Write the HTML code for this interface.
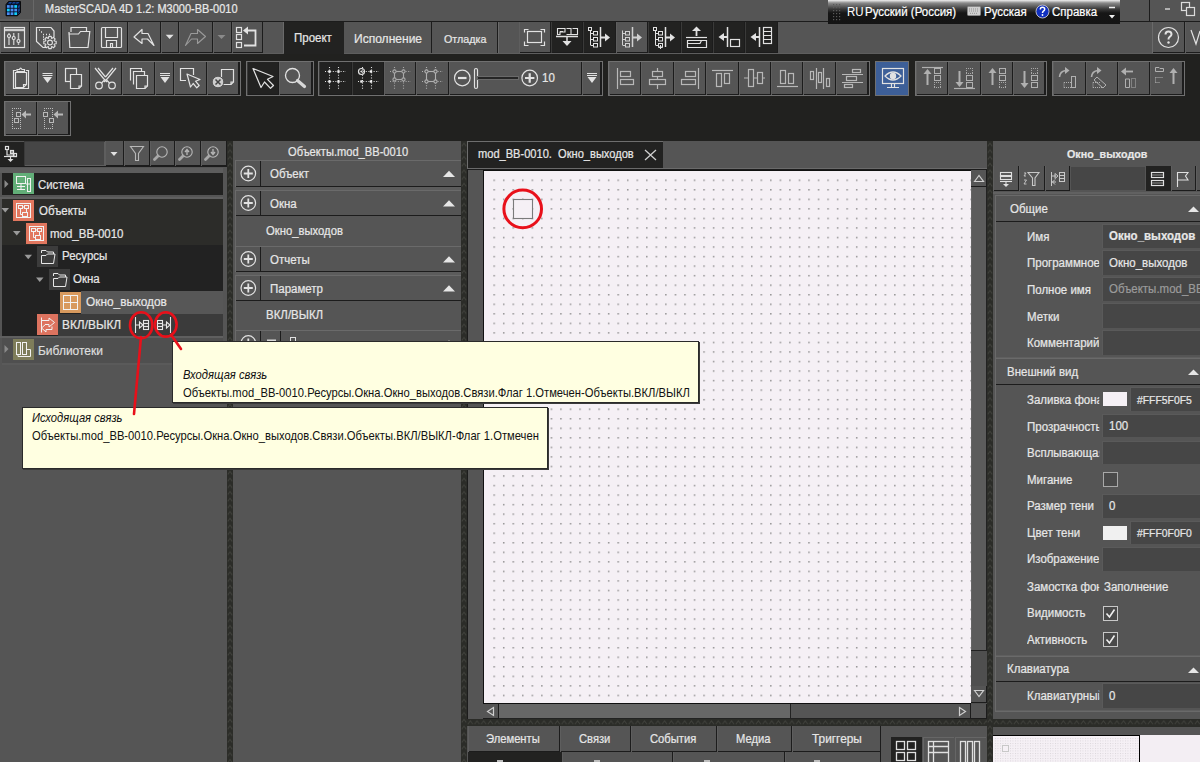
<!DOCTYPE html><html><head><meta charset="utf-8"><style>
html,body{margin:0;padding:0;}
body{width:1200px;height:762px;overflow:hidden;position:relative;background:#21211f;font-family:"Liberation Sans",sans-serif;}
div{position:absolute;box-sizing:border-box;}
.t{white-space:pre;-webkit-text-stroke:0.22px currentColor;}
</style></head><body>
<svg width="0" height="0" style="position:absolute"><defs><pattern id="vsp" x="0" y="0" width="6" height="6.7" patternUnits="userSpaceOnUse"><rect width="6" height="6.7" fill="#2b2c28"/><path d="M0.8 5.2 L3 2.2 L5.2 5.2" stroke="#40413c" stroke-width="1" fill="none"/></pattern><pattern id="hsp" x="0" y="0" width="6.7" height="7" patternUnits="userSpaceOnUse"><rect width="6.7" height="7" fill="#2b2c28"/><path d="M0.8 5.2 L3.3 1.8 L5.8 5.2" stroke="#40413c" stroke-width="1" fill="none"/></pattern></defs></svg>
<div style="left:0px;top:0px;width:1200px;height:21px;background:#555555"></div>
<div style="left:33px;top:0px;width:1px;height:21px;background:#686868"></div>
<div style="left:0px;top:19px;width:33px;height:2px;background:#5e5e5e"></div>
<div style="left:0px;top:21px;width:1200px;height:1px;background:#1c1c1c"></div>
<div class="t" style="left:45px;top:3.94px;font-size:11.88px;line-height:11.88px;color:#e8e8e8;transform:scaleX(0.926);transform-origin:0 0;">MasterSCADA 4D 1.2: M3000-BB-0010</div>
<div style="left:1149px;top:0px;width:1px;height:21px;background:#1c1c1c"></div>
<div style="left:0px;top:22px;width:1200px;height:31px;background:#555555"></div>
<div style="left:0px;top:53px;width:1200px;height:1px;background:#5e5e5e"></div>
<div style="left:0px;top:22px;width:30px;height:31px;background:#555555;box-shadow:inset -1px 0 0 #1c1c1c, inset 1px 0 0 #5e5e5e, inset 0 -1px 0 #1c1c1c"></div>
<div style="left:30px;top:22px;width:32px;height:31px;background:#555555;box-shadow:inset -1px 0 0 #1c1c1c, inset 1px 0 0 #5e5e5e, inset 0 -1px 0 #1c1c1c"></div>
<div style="left:62px;top:22px;width:33px;height:31px;background:#555555;box-shadow:inset -1px 0 0 #1c1c1c, inset 1px 0 0 #5e5e5e, inset 0 -1px 0 #1c1c1c"></div>
<div style="left:95px;top:22px;width:33px;height:31px;background:#555555;box-shadow:inset -1px 0 0 #1c1c1c, inset 1px 0 0 #5e5e5e, inset 0 -1px 0 #1c1c1c"></div>
<div style="left:128px;top:22px;width:33px;height:31px;background:#555555;box-shadow:inset -1px 0 0 #1c1c1c, inset 1px 0 0 #5e5e5e, inset 0 -1px 0 #1c1c1c"></div>
<div style="left:161px;top:22px;width:18px;height:31px;background:#555555;box-shadow:inset -1px 0 0 #1c1c1c, inset 1px 0 0 #5e5e5e, inset 0 -1px 0 #1c1c1c"></div>
<div style="left:179px;top:22px;width:34px;height:31px;background:#555555;box-shadow:inset -1px 0 0 #1c1c1c, inset 1px 0 0 #5e5e5e, inset 0 -1px 0 #1c1c1c"></div>
<div style="left:213px;top:22px;width:19px;height:31px;background:#555555;box-shadow:inset -1px 0 0 #1c1c1c, inset 1px 0 0 #5e5e5e, inset 0 -1px 0 #1c1c1c"></div>
<div style="left:232px;top:22px;width:31px;height:31px;background:#555555;box-shadow:inset -1px 0 0 #1c1c1c, inset 1px 0 0 #5e5e5e, inset 0 -1px 0 #1c1c1c"></div>
<div style="left:283px;top:22px;width:1px;height:31px;background:#6a6a6a"></div>
<div style="left:284px;top:22px;width:60px;height:32px;background:#222221"></div>
<div style="left:344px;top:22px;width:88px;height:31px;background:#555555;box-shadow:inset -1px 0 0 #1c1c1c"></div>
<div style="left:432px;top:22px;width:66px;height:31px;background:#555555;box-shadow:inset -1px 0 0 #1c1c1c"></div>
<div style="left:498px;top:22px;width:1px;height:31px;background:#6a6a6a"></div>
<div class="t" style="left:294px;top:32.49px;font-size:12.42px;line-height:12.42px;color:#e6e6e6;transform:scaleX(0.926);transform-origin:0 0;">Проект</div>
<div class="t" style="left:354px;top:31.98px;font-size:13.01px;line-height:13.01px;color:#e6e6e6;transform:scaleX(0.926);transform-origin:0 0;">Исполнение</div>
<div class="t" style="left:444px;top:33.17px;font-size:11.61px;line-height:11.61px;color:#e6e6e6;transform:scaleX(0.926);transform-origin:0 0;">Отладка</div>
<div style="left:519px;top:22px;width:32px;height:31px;background:#555555;box-shadow:inset -1px 0 0 #1c1c1c, inset 1px 0 0 #5e5e5e, inset 0 -1px 0 #1c1c1c"></div>
<div style="left:551px;top:22px;width:32px;height:31px;background:#222221;box-shadow:inset -1px 0 0 #1c1c1c, inset 1px 0 0 #3a3a39, inset 0 -1px 0 #1c1c1c"></div>
<div style="left:583px;top:22px;width:33px;height:31px;background:#222221;box-shadow:inset -1px 0 0 #1c1c1c, inset 1px 0 0 #3a3a39, inset 0 -1px 0 #1c1c1c"></div>
<div style="left:616px;top:22px;width:32px;height:31px;background:#555555;box-shadow:inset -1px 0 0 #1c1c1c, inset 1px 0 0 #5e5e5e, inset 0 -1px 0 #1c1c1c"></div>
<div style="left:648px;top:22px;width:33px;height:31px;background:#222221;box-shadow:inset -1px 0 0 #1c1c1c, inset 1px 0 0 #3a3a39, inset 0 -1px 0 #1c1c1c"></div>
<div style="left:681px;top:22px;width:32px;height:31px;background:#222221;box-shadow:inset -1px 0 0 #1c1c1c, inset 1px 0 0 #3a3a39, inset 0 -1px 0 #1c1c1c"></div>
<div style="left:713px;top:22px;width:32px;height:31px;background:#222221;box-shadow:inset -1px 0 0 #1c1c1c, inset 1px 0 0 #3a3a39, inset 0 -1px 0 #1c1c1c"></div>
<div style="left:745px;top:22px;width:33px;height:31px;background:#222221;box-shadow:inset -1px 0 0 #1c1c1c, inset 1px 0 0 #3a3a39, inset 0 -1px 0 #1c1c1c"></div>
<div style="left:1152px;top:22px;width:33px;height:31px;background:#555555;box-shadow:inset -1px 0 0 #1c1c1c, inset 1px 0 0 #5e5e5e, inset 0 -1px 0 #1c1c1c"></div>
<div style="left:1185px;top:22px;width:35px;height:31px;background:#555555;box-shadow:inset -1px 0 0 #1c1c1c, inset 1px 0 0 #5e5e5e, inset 0 -1px 0 #1c1c1c"></div>
<div style="left:1152px;top:22px;width:1px;height:31px;background:#6a6a6a"></div>
<div style="left:4px;top:61px;width:237px;height:35px;box-sizing:border-box;border:1px solid #707070;background:#1c1c1c"></div>
<div style="left:5px;top:62px;width:33px;height:33px;background:#555555;box-shadow:inset -1px 0 0 #1c1c1c, inset 1px 0 0 #5e5e5e, inset 0 -1px 0 #1c1c1c"></div>
<div style="left:38px;top:62px;width:19px;height:33px;background:#555555;box-shadow:inset -1px 0 0 #1c1c1c, inset 1px 0 0 #5e5e5e, inset 0 -1px 0 #1c1c1c"></div>
<div style="left:57px;top:62px;width:33px;height:33px;background:#555555;box-shadow:inset -1px 0 0 #1c1c1c, inset 1px 0 0 #5e5e5e, inset 0 -1px 0 #1c1c1c"></div>
<div style="left:90px;top:62px;width:32px;height:33px;background:#555555;box-shadow:inset -1px 0 0 #1c1c1c, inset 1px 0 0 #5e5e5e, inset 0 -1px 0 #1c1c1c"></div>
<div style="left:122px;top:62px;width:33px;height:33px;background:#555555;box-shadow:inset -1px 0 0 #1c1c1c, inset 1px 0 0 #5e5e5e, inset 0 -1px 0 #1c1c1c"></div>
<div style="left:155px;top:62px;width:19px;height:33px;background:#555555;box-shadow:inset -1px 0 0 #1c1c1c, inset 1px 0 0 #5e5e5e, inset 0 -1px 0 #1c1c1c"></div>
<div style="left:174px;top:62px;width:33px;height:33px;background:#555555;box-shadow:inset -1px 0 0 #1c1c1c, inset 1px 0 0 #5e5e5e, inset 0 -1px 0 #1c1c1c"></div>
<div style="left:207px;top:62px;width:32px;height:33px;background:#555555;box-shadow:inset -1px 0 0 #1c1c1c, inset 1px 0 0 #5e5e5e, inset 0 -1px 0 #1c1c1c"></div>
<div style="left:246px;top:61px;width:68px;height:35px;box-sizing:border-box;border:1px solid #707070;background:#1c1c1c"></div>
<div style="left:247px;top:62px;width:32px;height:33px;background:#222221;box-shadow:inset -1px 0 0 #1c1c1c, inset 1px 0 0 #3a3a39, inset 0 -1px 0 #1c1c1c"></div>
<div style="left:279px;top:62px;width:33px;height:33px;background:#555555;box-shadow:inset -1px 0 0 #1c1c1c, inset 1px 0 0 #5e5e5e, inset 0 -1px 0 #1c1c1c"></div>
<div style="left:318px;top:61px;width:285px;height:35px;box-sizing:border-box;border:1px solid #707070;background:#1c1c1c"></div>
<div style="left:319px;top:62px;width:33px;height:33px;background:#222221;box-shadow:inset -1px 0 0 #1c1c1c, inset 1px 0 0 #3a3a39, inset 0 -1px 0 #1c1c1c"></div>
<div style="left:352px;top:62px;width:32px;height:33px;background:#222221;box-shadow:inset -1px 0 0 #1c1c1c, inset 1px 0 0 #3a3a39, inset 0 -1px 0 #1c1c1c"></div>
<div style="left:384px;top:62px;width:32px;height:33px;background:#555555;box-shadow:inset -1px 0 0 #1c1c1c, inset 1px 0 0 #5e5e5e, inset 0 -1px 0 #1c1c1c"></div>
<div style="left:416px;top:62px;width:33px;height:33px;background:#555555;box-shadow:inset -1px 0 0 #1c1c1c, inset 1px 0 0 #5e5e5e, inset 0 -1px 0 #1c1c1c"></div>
<div style="left:449px;top:62px;width:133px;height:33px;background:#555555;box-shadow:inset -1px 0 0 #1c1c1c, inset 1px 0 0 #5e5e5e, inset 0 -1px 0 #1c1c1c"></div>
<div style="left:582px;top:62px;width:19px;height:33px;background:#555555;box-shadow:inset -1px 0 0 #1c1c1c, inset 1px 0 0 #5e5e5e, inset 0 -1px 0 #1c1c1c"></div>
<div style="left:608px;top:61px;width:262px;height:35px;box-sizing:border-box;border:1px solid #707070;background:#1c1c1c"></div>
<div style="left:609px;top:62px;width:32px;height:33px;background:#555555;box-shadow:inset -1px 0 0 #1c1c1c, inset 1px 0 0 #5e5e5e, inset 0 -1px 0 #1c1c1c"></div>
<div style="left:641px;top:62px;width:33px;height:33px;background:#555555;box-shadow:inset -1px 0 0 #1c1c1c, inset 1px 0 0 #5e5e5e, inset 0 -1px 0 #1c1c1c"></div>
<div style="left:674px;top:62px;width:32px;height:33px;background:#555555;box-shadow:inset -1px 0 0 #1c1c1c, inset 1px 0 0 #5e5e5e, inset 0 -1px 0 #1c1c1c"></div>
<div style="left:706px;top:62px;width:33px;height:33px;background:#555555;box-shadow:inset -1px 0 0 #1c1c1c, inset 1px 0 0 #5e5e5e, inset 0 -1px 0 #1c1c1c"></div>
<div style="left:739px;top:62px;width:32px;height:33px;background:#555555;box-shadow:inset -1px 0 0 #1c1c1c, inset 1px 0 0 #5e5e5e, inset 0 -1px 0 #1c1c1c"></div>
<div style="left:771px;top:62px;width:32px;height:33px;background:#555555;box-shadow:inset -1px 0 0 #1c1c1c, inset 1px 0 0 #5e5e5e, inset 0 -1px 0 #1c1c1c"></div>
<div style="left:803px;top:62px;width:33px;height:33px;background:#555555;box-shadow:inset -1px 0 0 #1c1c1c, inset 1px 0 0 #5e5e5e, inset 0 -1px 0 #1c1c1c"></div>
<div style="left:836px;top:62px;width:32px;height:33px;background:#555555;box-shadow:inset -1px 0 0 #1c1c1c, inset 1px 0 0 #5e5e5e, inset 0 -1px 0 #1c1c1c"></div>
<div style="left:875px;top:61px;width:34px;height:35px;box-sizing:border-box;border:1px solid #707070;background:#1c1c1c"></div>
<div style="left:876px;top:62px;width:32px;height:33px;background:#3d5f98"></div>
<div style="left:915px;top:61px;width:132px;height:35px;box-sizing:border-box;border:1px solid #707070;background:#1c1c1c"></div>
<div style="left:916px;top:62px;width:32px;height:33px;background:#555555;box-shadow:inset -1px 0 0 #1c1c1c, inset 1px 0 0 #5e5e5e, inset 0 -1px 0 #1c1c1c"></div>
<div style="left:948px;top:62px;width:33px;height:33px;background:#555555;box-shadow:inset -1px 0 0 #1c1c1c, inset 1px 0 0 #5e5e5e, inset 0 -1px 0 #1c1c1c"></div>
<div style="left:981px;top:62px;width:32px;height:33px;background:#555555;box-shadow:inset -1px 0 0 #1c1c1c, inset 1px 0 0 #5e5e5e, inset 0 -1px 0 #1c1c1c"></div>
<div style="left:1013px;top:62px;width:32px;height:33px;background:#555555;box-shadow:inset -1px 0 0 #1c1c1c, inset 1px 0 0 #5e5e5e, inset 0 -1px 0 #1c1c1c"></div>
<div style="left:1052px;top:61px;width:133px;height:35px;box-sizing:border-box;border:1px solid #707070;background:#1c1c1c"></div>
<div style="left:1053px;top:62px;width:33px;height:33px;background:#555555;box-shadow:inset -1px 0 0 #1c1c1c, inset 1px 0 0 #5e5e5e, inset 0 -1px 0 #1c1c1c"></div>
<div style="left:1086px;top:62px;width:32px;height:33px;background:#555555;box-shadow:inset -1px 0 0 #1c1c1c, inset 1px 0 0 #5e5e5e, inset 0 -1px 0 #1c1c1c"></div>
<div style="left:1118px;top:62px;width:32px;height:33px;background:#555555;box-shadow:inset -1px 0 0 #1c1c1c, inset 1px 0 0 #5e5e5e, inset 0 -1px 0 #1c1c1c"></div>
<div style="left:1150px;top:62px;width:33px;height:33px;background:#555555;box-shadow:inset -1px 0 0 #1c1c1c, inset 1px 0 0 #5e5e5e, inset 0 -1px 0 #1c1c1c"></div>
<div class="t" style="left:542px;top:72.49px;font-size:12.42px;line-height:12.42px;color:#e6e6e6;transform:scaleX(0.926);transform-origin:0 0;">10</div>
<div style="left:4px;top:101px;width:67px;height:35px;box-sizing:border-box;border:1px solid #707070;background:#1c1c1c"></div>
<div style="left:5px;top:102px;width:32px;height:33px;background:#555555;box-shadow:inset -1px 0 0 #1c1c1c, inset 1px 0 0 #5e5e5e, inset 0 -1px 0 #1c1c1c"></div>
<div style="left:37px;top:102px;width:32px;height:33px;background:#555555;box-shadow:inset -1px 0 0 #1c1c1c, inset 1px 0 0 #5e5e5e, inset 0 -1px 0 #1c1c1c"></div>
<div style="left:0px;top:141px;width:227px;height:621px;background:#555555"></div>
<div style="left:0px;top:141px;width:24px;height:25px;background:#222221;box-shadow:inset 0 1px 0 #555"></div>
<div style="left:24px;top:141px;width:81px;height:25px;background:#464646;box-shadow:inset 1px 1px 0 #3a3a3a, inset -1px -1px 0 #5e5e5e"></div>
<div style="left:105px;top:141px;width:19px;height:25px;background:#555555;box-shadow:inset -1px 0 0 #1c1c1c, inset 1px 0 0 #5e5e5e, inset 0 -1px 0 #1c1c1c"></div>
<div style="left:124px;top:141px;width:26px;height:25px;background:#555555;box-shadow:inset -1px 0 0 #1c1c1c, inset 1px 0 0 #5e5e5e, inset 0 -1px 0 #1c1c1c"></div>
<div style="left:150px;top:141px;width:25px;height:25px;background:#555555;box-shadow:inset -1px 0 0 #1c1c1c, inset 1px 0 0 #5e5e5e, inset 0 -1px 0 #1c1c1c"></div>
<div style="left:175px;top:141px;width:26px;height:25px;background:#555555;box-shadow:inset -1px 0 0 #1c1c1c, inset 1px 0 0 #5e5e5e, inset 0 -1px 0 #1c1c1c"></div>
<div style="left:201px;top:141px;width:26px;height:25px;background:#555555;box-shadow:inset -1px 0 0 #1c1c1c, inset 1px 0 0 #5e5e5e, inset 0 -1px 0 #1c1c1c"></div>
<div style="left:0px;top:166px;width:227px;height:1px;background:#1c1c1c"></div>
<div style="left:0px;top:168px;width:223px;height:5px;background:#5d5d5d"></div>
<div style="left:2px;top:173px;width:221px;height:22px;background:#222221"></div>
<div style="left:0px;top:197px;width:223px;height:2px;background:#5f5f5f"></div>
<div style="left:2px;top:199px;width:221px;height:46px;background:#2c2c29"></div>
<div style="left:2px;top:245px;width:221px;height:46px;background:#222222"></div>
<div style="left:2px;top:291px;width:221px;height:23px;background:#222222"></div>
<div style="left:81px;top:291px;width:142px;height:23px;background:#575757"></div>
<div style="left:2px;top:314px;width:221px;height:22px;background:#222222"></div>
<div style="left:58px;top:314px;width:165px;height:22px;background:#3b3b3b"></div>
<div style="left:0px;top:336px;width:223px;height:2px;background:#5f5f5f"></div>
<div style="left:2px;top:338px;width:221px;height:25px;background:#4f4f4f"></div>
<div style="left:2px;top:363px;width:221px;height:2px;background:#5a5a5a"></div>
<svg style="position:absolute;left:227px;top:141px" width="6" height="621"><rect width="6" height="621" fill="url(#vsp)"/></svg>
<div class="t" style="left:38px;top:178.58px;font-size:12.31px;line-height:12.31px;color:#e6e6e6;transform:scaleX(0.926);transform-origin:0 0;">Система</div>
<div class="t" style="left:38.5px;top:204.99px;font-size:12.42px;line-height:12.42px;color:#e6e6e6;transform:scaleX(0.926);transform-origin:0 0;">Объекты</div>
<div class="t" style="left:50px;top:227.99px;font-size:12.42px;line-height:12.42px;color:#e6e6e6;transform:scaleX(0.926);transform-origin:0 0;">mod_BB-0010</div>
<div class="t" style="left:62px;top:250.49px;font-size:12.42px;line-height:12.42px;color:#e6e6e6;transform:scaleX(0.926);transform-origin:0 0;">Ресурсы</div>
<div class="t" style="left:73px;top:272.99px;font-size:12.42px;line-height:12.42px;color:#e6e6e6;transform:scaleX(0.926);transform-origin:0 0;">Окна</div>
<div class="t" style="left:86px;top:295.67px;font-size:12.80px;line-height:12.80px;color:#e6e6e6;transform:scaleX(0.926);transform-origin:0 0;">Окно_выходов</div>
<div class="t" style="left:62px;top:318.62px;font-size:12.85px;line-height:12.85px;color:#e6e6e6;transform:scaleX(0.926);transform-origin:0 0;">ВКЛ/ВЫКЛ</div>
<div class="t" style="left:38px;top:345.03px;font-size:12.96px;line-height:12.96px;color:#dcdcdc;transform:scaleX(0.926);transform-origin:0 0;">Библиотеки</div>
<div style="left:233px;top:141px;width:228px;height:621px;background:#555555"></div>
<div class="t" style="left:287.5px;top:146.23px;font-size:12.02px;line-height:12.02px;color:#e6e6e6;transform:scaleX(0.926);transform-origin:0 0;">Объекты.mod_BB-0010</div>
<div style="left:235px;top:160px;width:226px;height:27px;background:#555555;box-shadow:inset 0 1px 0 #6a6a6a, inset 1px 0 0 #6a6a6a, inset 0 -1px 0 #1c1c1c"></div>
<div style="left:260px;top:161px;width:1px;height:25px;background:#1c1c1c"></div>
<div class="t" style="left:269.7px;top:168.49px;font-size:12.42px;line-height:12.42px;color:#e6e6e6;transform:scaleX(0.926);transform-origin:0 0;">Объект</div>
<div style="left:235px;top:187px;width:226px;height:3px;background:#5c5c5c"></div>
<div style="left:235px;top:190px;width:226px;height:26px;background:#555555;box-shadow:inset 0 1px 0 #6a6a6a, inset 1px 0 0 #6a6a6a, inset 0 -1px 0 #1c1c1c"></div>
<div style="left:260px;top:191px;width:1px;height:24px;background:#1c1c1c"></div>
<div class="t" style="left:269.7px;top:198.49px;font-size:12.42px;line-height:12.42px;color:#e6e6e6;transform:scaleX(0.926);transform-origin:0 0;">Окна</div>
<div style="left:235px;top:216px;width:226px;height:30px;background:#555555;box-shadow:inset 1px 0 0 #686868"></div>
<div class="t" style="left:266px;top:224.99px;font-size:12.18px;line-height:12.18px;color:#e6e6e6;transform:scaleX(0.926);transform-origin:0 0;">Окно_выходов</div>
<div style="left:235px;top:246px;width:226px;height:26px;background:#555555;box-shadow:inset 0 1px 0 #6a6a6a, inset 1px 0 0 #6a6a6a, inset 0 -1px 0 #1c1c1c"></div>
<div style="left:260px;top:247px;width:1px;height:24px;background:#1c1c1c"></div>
<div class="t" style="left:269.7px;top:254.19px;font-size:12.42px;line-height:12.42px;color:#e6e6e6;transform:scaleX(0.926);transform-origin:0 0;">Отчеты</div>
<div style="left:235px;top:272px;width:226px;height:3px;background:#5c5c5c"></div>
<div style="left:235px;top:275px;width:226px;height:26px;background:#555555;box-shadow:inset 0 1px 0 #6a6a6a, inset 1px 0 0 #6a6a6a, inset 0 -1px 0 #1c1c1c"></div>
<div style="left:260px;top:276px;width:1px;height:24px;background:#1c1c1c"></div>
<div class="t" style="left:269.7px;top:283.49px;font-size:12.42px;line-height:12.42px;color:#e6e6e6;transform:scaleX(0.926);transform-origin:0 0;">Параметр</div>
<div style="left:235px;top:301px;width:226px;height:29px;background:#555555;box-shadow:inset 1px 0 0 #686868"></div>
<div class="t" style="left:265.5px;top:308.89px;font-size:12.42px;line-height:12.42px;color:#e6e6e6;transform:scaleX(0.926);transform-origin:0 0;">ВКЛ/ВЫКЛ</div>
<div style="left:235px;top:330px;width:226px;height:26px;background:#555555;box-shadow:inset 0 1px 0 #6a6a6a, inset 1px 0 0 #6a6a6a, inset 0 -1px 0 #1c1c1c"></div>
<div style="left:260px;top:331px;width:1px;height:24px;background:#1c1c1c"></div>
<div class="t" style="left:269.7px;top:337.49px;font-size:12.42px;line-height:12.42px;color:#e6e6e6;transform:scaleX(0.926);transform-origin:0 0;"></div>
<svg style="position:absolute;left:461px;top:141px" width="6" height="621"><rect width="6" height="621" fill="url(#vsp)"/></svg>
<div style="left:467px;top:141px;width:520px;height:621px;background:#555555"></div>
<div style="left:467px;top:141px;width:196px;height:27px;background:#222221;box-shadow:inset 0 1px 0 #6e6e6e, inset 1px 0 0 #6e6e6e"></div>
<div class="t" style="left:477.7px;top:149.17px;font-size:11.97px;line-height:11.97px;color:#e6e6e6;transform:scaleX(0.926);transform-origin:0 0;">mod_BB-0010.  Окно_выходов</div>
<svg style="position:absolute;left:644px;top:149px;" width="13" height="12" viewBox="0 0 13 12" fill="none" stroke="#e0e0e0" stroke-width="1.2"><path d="M1 1 L12 11 M12 1 L1 11" stroke="#d0d0d0" stroke-width="1.3"/></svg>
<div style="left:467px;top:168px;width:520px;height:1px;background:#6a6a6a"></div>
<div style="left:467px;top:169px;width:1px;height:550px;background:#1c1c1c"></div>
<div style="left:468px;top:169px;width:519px;height:1px;background:#1c1c1c"></div>
<div style="left:483px;top:170px;width:1px;height:534px;background:#111"></div>
<div style="left:484px;top:171px;width:487px;height:532px;background:#f5f0f5"></div>
<svg style="position:absolute;left:484px;top:171px" width="487" height="532"><defs><pattern id="dg" x="9.4" y="8.5" width="9.54" height="9.54" patternUnits="userSpaceOnUse"><rect x="0.2" y="0" width="1.2" height="1.5" fill="#7a7a7a"/></pattern></defs><rect x="5" y="4" width="482" height="528" fill="url(#dg)"/></svg>
<div style="left:484px;top:170px;width:487px;height:1px;background:#111"></div>
<div style="left:484px;top:703px;width:487px;height:1px;background:#111"></div>
<div style="left:971px;top:170px;width:16px;height:534px;background:#4f4f4f"></div>
<div style="left:971px;top:170px;width:16px;height:17px;background:#555555;box-shadow:inset -1px -1px 0 #1c1c1c"></div>
<div style="left:971px;top:187px;width:16px;height:464px;background:#5c5c5c;box-shadow:inset -1px -1px 0 #222, inset 1px 0 0 #656565"></div>
<div style="left:971px;top:686px;width:16px;height:17px;background:#555555;box-shadow:inset -1px -1px 0 #1c1c1c"></div>
<svg style="position:absolute;left:973px;top:173px;" width="12" height="10" viewBox="0 0 12 10" fill="none" stroke="#e0e0e0" stroke-width="1.2"><path d="M1.5 8.5 L6 2.5 L10.5 8.5 Z" stroke="#cfcfcf"/></svg>
<svg style="position:absolute;left:973px;top:689px;" width="12" height="10" viewBox="0 0 12 10" fill="none" stroke="#e0e0e0" stroke-width="1.2"><path d="M1.5 1.5 L6 7.5 L10.5 1.5 Z" stroke="#cfcfcf"/></svg>
<div style="left:468px;top:704px;width:519px;height:15px;background:#4f4f4f"></div>
<div style="left:468px;top:704px;width:15px;height:15px;background:#555555"></div>
<div style="left:483px;top:704px;width:16px;height:15px;background:#555555;box-shadow:inset -1px -1px 0 #1c1c1c"></div>
<div style="left:499px;top:704px;width:292px;height:15px;background:#676767;box-shadow:inset -1px -1px 0 #222"></div>
<div style="left:791px;top:704px;width:163px;height:15px;background:#555555;box-shadow:inset 0 -1px 0 #222"></div>
<div style="left:954px;top:704px;width:17px;height:15px;background:#555555;box-shadow:inset -1px -1px 0 #1c1c1c"></div>
<div style="left:971px;top:704px;width:16px;height:15px;background:#555555;box-shadow:inset -1px -1px 0 #1c1c1c"></div>
<svg style="position:absolute;left:485px;top:706px;" width="12" height="11" viewBox="0 0 12 11" fill="none" stroke="#e0e0e0" stroke-width="1.2"><path d="M8.5 1.5 L2.5 5.5 L8.5 9.5 Z" stroke="#cfcfcf"/></svg>
<svg style="position:absolute;left:956px;top:706px;" width="12" height="11" viewBox="0 0 12 11" fill="none" stroke="#e0e0e0" stroke-width="1.2"><path d="M3.5 1.5 L9.5 5.5 L3.5 9.5 Z" stroke="#cfcfcf"/></svg>
<svg style="position:absolute;left:467px;top:719px" width="520" height="7"><rect width="520" height="7" fill="url(#hsp)"/></svg>
<div style="left:468px;top:726px;width:92px;height:26px;background:#555555;box-shadow:inset -1px 0 0 #1c1c1c, inset 1px 0 0 #5e5e5e, inset 0 -1px 0 #1c1c1c"></div>
<div style="left:560px;top:726px;width:71px;height:26px;background:#555555;box-shadow:inset -1px 0 0 #1c1c1c, inset 1px 0 0 #5e5e5e, inset 0 -1px 0 #1c1c1c"></div>
<div style="left:631px;top:726px;width:86px;height:26px;background:#555555;box-shadow:inset -1px 0 0 #1c1c1c, inset 1px 0 0 #5e5e5e, inset 0 -1px 0 #1c1c1c"></div>
<div style="left:717px;top:726px;width:75px;height:26px;background:#555555;box-shadow:inset -1px 0 0 #1c1c1c, inset 1px 0 0 #5e5e5e, inset 0 -1px 0 #1c1c1c"></div>
<div style="left:792px;top:726px;width:89px;height:26px;background:#555555;box-shadow:inset -1px 0 0 #1c1c1c, inset 1px 0 0 #5e5e5e, inset 0 -1px 0 #1c1c1c"></div>
<div style="left:881px;top:726px;width:106px;height:36px;background:#555555"></div>
<div class="t" style="left:486px;top:733.16px;font-size:12.10px;line-height:12.10px;color:#e6e6e6;transform:scaleX(0.926);transform-origin:0 0;">Элементы</div>
<div class="t" style="left:578.7px;top:733.16px;font-size:12.10px;line-height:12.10px;color:#e6e6e6;transform:scaleX(0.926);transform-origin:0 0;">Связи</div>
<div class="t" style="left:650.2px;top:733.16px;font-size:12.10px;line-height:12.10px;color:#e6e6e6;transform:scaleX(0.926);transform-origin:0 0;">События</div>
<div class="t" style="left:735.7px;top:733.16px;font-size:12.10px;line-height:12.10px;color:#e6e6e6;transform:scaleX(0.926);transform-origin:0 0;">Медиа</div>
<div class="t" style="left:812.4px;top:732.57px;font-size:12.80px;line-height:12.80px;color:#e6e6e6;transform:scaleX(0.926);transform-origin:0 0;">Триггеры</div>
<div style="left:468px;top:752px;width:94px;height:10px;background:#222221"></div>
<div style="left:562px;top:752px;width:111px;height:10px;background:#555555;box-shadow:inset -1px 0 0 #1c1c1c, inset 1px 0 0 #5e5e5e"></div>
<div style="left:673px;top:752px;width:112px;height:10px;background:#555555;box-shadow:inset -1px 0 0 #1c1c1c, inset 1px 0 0 #5e5e5e"></div>
<div style="left:785px;top:752px;width:96px;height:10px;background:#555555;box-shadow:inset -1px 0 0 #1c1c1c, inset 1px 0 0 #5e5e5e"></div>
<div style="left:891px;top:737px;width:31px;height:25px;background:#222221"></div>
<div style="left:923px;top:737px;width:31px;height:25px;background:#555555;box-shadow:inset 1px 1px 0 #666"></div>
<div style="left:955px;top:737px;width:31px;height:25px;background:#555555;box-shadow:inset 1px 1px 0 #666"></div>
<svg style="position:absolute;left:987px;top:141px" width="6" height="621"><rect width="6" height="621" fill="url(#vsp)"/></svg>
<div style="left:993px;top:141px;width:207px;height:621px;background:#555555"></div>
<div class="t" style="left:1066.5px;top:149.12px;font-size:11.56px;line-height:11.56px;color:#e8e8e8;transform:scaleX(0.926);transform-origin:0 0;font-weight:bold;">Окно_выходов</div>
<div style="left:993px;top:166px;width:26px;height:25px;background:#555555;box-shadow:inset -1px 0 0 #1c1c1c, inset 1px 0 0 #5e5e5e, inset 0 -1px 0 #1c1c1c"></div>
<div style="left:1019px;top:166px;width:26px;height:25px;background:#555555;box-shadow:inset -1px 0 0 #1c1c1c, inset 1px 0 0 #5e5e5e, inset 0 -1px 0 #1c1c1c"></div>
<div style="left:1045px;top:166px;width:25px;height:25px;background:#555555;box-shadow:inset -1px 0 0 #1c1c1c, inset 1px 0 0 #5e5e5e, inset 0 -1px 0 #1c1c1c"></div>
<div style="left:1071px;top:167px;width:74px;height:23px;background:#464646"></div>
<div style="left:1146px;top:166px;width:25px;height:25px;background:#222221"></div>
<div style="left:1171px;top:166px;width:25px;height:25px;background:#555555;box-shadow:inset -1px 0 0 #1c1c1c, inset 1px 0 0 #5e5e5e, inset 0 -1px 0 #1c1c1c"></div>
<div style="left:1196px;top:166px;width:29px;height:25px;background:#555555;box-shadow:inset -1px 0 0 #1c1c1c, inset 1px 0 0 #5e5e5e, inset 0 -1px 0 #1c1c1c"></div>
<div style="left:993px;top:192px;width:207px;height:2px;background:#616161"></div>
<div style="left:995px;top:195px;width:205px;height:27px;background:#555555;box-shadow:inset 0 1px 0 #6a6a6a, inset 1px 0 0 #6a6a6a, inset 0 -1px 0 #1c1c1c"></div>
<div class="t" style="left:1010px;top:202.89px;font-size:12.42px;line-height:12.42px;color:#e6e6e6;transform:scaleX(0.926);transform-origin:0 0;">Общие</div>
<svg style="position:absolute;left:1186px;top:205px;" width="14" height="8" viewBox="0 0 14 8" fill="none" stroke="#e0e0e0" stroke-width="1.2"><path d="M2 7 L7.5 1.5 L13 7 Z" fill="#e6e6e6" stroke="none"/></svg>
<div style="left:995px;top:222px;width:205px;height:136px;background:#555555;box-shadow:inset 1px 0 0 #6a6a6a, inset 0 -1px 0 #5f5f5f"></div>
<div class="t" style="left:1027px;top:231.49px;font-size:12.42px;line-height:12.42px;color:#e6e6e6;transform:scaleX(0.926);transform-origin:0 0;width:77.8px;overflow:hidden;">Имя</div>
<div style="left:1102px;top:224px;width:100px;height:24px;background:#464646;box-shadow:inset 0 1px 0 #5a5a5a, inset 1px 0 0 #5a5a5a"></div>
<div class="t" style="left:1108.5px;top:229.99px;font-size:12.42px;line-height:12.42px;color:#e6e6e6;transform:scaleX(0.926);transform-origin:0 0;font-weight:bold;">Окно_выходов</div>
<div class="t" style="left:1027px;top:257.49px;font-size:12.42px;line-height:12.42px;color:#e6e6e6;transform:scaleX(0.926);transform-origin:0 0;width:77.8px;overflow:hidden;">Программное</div>
<div style="left:1102px;top:250px;width:100px;height:25px;background:#464646;box-shadow:inset 0 1px 0 #5a5a5a, inset 1px 0 0 #5a5a5a"></div>
<div class="t" style="left:1108.5px;top:256.99px;font-size:12.42px;line-height:12.42px;color:#e6e6e6;transform:scaleX(0.926);transform-origin:0 0;">Окно_выходов</div>
<div class="t" style="left:1027px;top:283.99px;font-size:12.42px;line-height:12.42px;color:#e6e6e6;transform:scaleX(0.926);transform-origin:0 0;width:77.8px;overflow:hidden;">Полное имя</div>
<div style="left:1102px;top:277px;width:100px;height:24px;background:#464646;box-shadow:inset 0 1px 0 #5a5a5a, inset 1px 0 0 #5a5a5a"></div>
<div class="t" style="left:1108.5px;top:282.99px;font-size:12.42px;line-height:12.42px;color:#9a9a9a;transform:scaleX(0.926);transform-origin:0 0;">Объекты.mod_BB-0010.Ресурсы</div>
<div class="t" style="left:1027px;top:311.19px;font-size:12.42px;line-height:12.42px;color:#e6e6e6;transform:scaleX(0.926);transform-origin:0 0;width:77.8px;overflow:hidden;">Метки</div>
<div style="left:1102px;top:303px;width:100px;height:25px;background:#464646;box-shadow:inset 0 1px 0 #5a5a5a, inset 1px 0 0 #5a5a5a"></div>
<div class="t" style="left:1027px;top:337.49px;font-size:12.42px;line-height:12.42px;color:#e6e6e6;transform:scaleX(0.926);transform-origin:0 0;width:77.8px;overflow:hidden;">Комментарий</div>
<div style="left:1102px;top:330px;width:100px;height:25px;background:#464646;box-shadow:inset 0 1px 0 #5a5a5a, inset 1px 0 0 #5a5a5a"></div>
<div style="left:995px;top:358px;width:205px;height:27px;background:#555555;box-shadow:inset 0 1px 0 #6a6a6a, inset 1px 0 0 #6a6a6a, inset 0 -1px 0 #1c1c1c"></div>
<div class="t" style="left:1006.5px;top:366.49px;font-size:12.42px;line-height:12.42px;color:#e6e6e6;transform:scaleX(0.926);transform-origin:0 0;">Внешний вид</div>
<svg style="position:absolute;left:1186px;top:368px;" width="14" height="8" viewBox="0 0 14 8" fill="none" stroke="#e0e0e0" stroke-width="1.2"><path d="M2 7 L7.5 1.5 L13 7 Z" fill="#e6e6e6" stroke="none"/></svg>
<div style="left:995px;top:385px;width:205px;height:271px;background:#555555;box-shadow:inset 1px 0 0 #6a6a6a, inset 0 -1px 0 #5f5f5f"></div>
<div class="t" style="left:1027px;top:393.79px;font-size:12.42px;line-height:12.42px;color:#e6e6e6;transform:scaleX(0.926);transform-origin:0 0;width:77.8px;overflow:hidden;">Заливка фона</div>
<div style="left:1103px;top:392px;width:24px;height:14px;background:#f5f0f5"></div>
<div style="left:1130px;top:387px;width:72px;height:24px;background:#464646;box-shadow:inset 0 1px 0 #5a5a5a, inset 1px 0 0 #5a5a5a"></div>
<div class="t" style="left:1136.5px;top:394.99px;font-size:11.23px;line-height:11.23px;color:#e6e6e6;transform:scaleX(0.926);transform-origin:0 0;">#FFF5F0F5</div>
<div class="t" style="left:1027px;top:420.89px;font-size:12.42px;line-height:12.42px;color:#e6e6e6;transform:scaleX(0.926);transform-origin:0 0;width:77.8px;overflow:hidden;">Прозрачность</div>
<div style="left:1102px;top:414px;width:100px;height:23px;background:#464646;box-shadow:inset 0 1px 0 #5a5a5a, inset 1px 0 0 #5a5a5a"></div>
<div class="t" style="left:1108.5px;top:419.99px;font-size:12.42px;line-height:12.42px;color:#e6e6e6;transform:scaleX(0.926);transform-origin:0 0;">100</div>
<div class="t" style="left:1027px;top:447.19px;font-size:12.42px;line-height:12.42px;color:#e6e6e6;transform:scaleX(0.926);transform-origin:0 0;width:77.8px;overflow:hidden;">Всплывающая</div>
<div style="left:1102px;top:441px;width:100px;height:23px;background:#464646;box-shadow:inset 0 1px 0 #5a5a5a, inset 1px 0 0 #5a5a5a"></div>
<div class="t" style="left:1027px;top:474.29px;font-size:12.42px;line-height:12.42px;color:#e6e6e6;transform:scaleX(0.926);transform-origin:0 0;width:77.8px;overflow:hidden;">Мигание</div>
<div style="left:1103px;top:472px;width:15px;height:15px;box-sizing:border-box;border:1px solid #a8a8a8;background:#4a4a4a"></div>
<div class="t" style="left:1027px;top:500.49px;font-size:12.42px;line-height:12.42px;color:#e6e6e6;transform:scaleX(0.926);transform-origin:0 0;width:77.8px;overflow:hidden;">Размер тени</div>
<div style="left:1102px;top:494px;width:100px;height:24px;background:#464646;box-shadow:inset 0 1px 0 #5a5a5a, inset 1px 0 0 #5a5a5a"></div>
<div class="t" style="left:1108.5px;top:499.99px;font-size:12.42px;line-height:12.42px;color:#e6e6e6;transform:scaleX(0.926);transform-origin:0 0;">0</div>
<div class="t" style="left:1027px;top:527.49px;font-size:12.42px;line-height:12.42px;color:#e6e6e6;transform:scaleX(0.926);transform-origin:0 0;width:77.8px;overflow:hidden;">Цвет тени</div>
<div style="left:1103px;top:526px;width:24px;height:14px;background:#f0f0f0"></div>
<div style="left:1130px;top:521px;width:72px;height:23px;background:#464646;box-shadow:inset 0 1px 0 #5a5a5a, inset 1px 0 0 #5a5a5a"></div>
<div class="t" style="left:1136.5px;top:527.99px;font-size:11.23px;line-height:11.23px;color:#e6e6e6;transform:scaleX(0.926);transform-origin:0 0;">#FFF0F0F0</div>
<div class="t" style="left:1027px;top:553.49px;font-size:12.42px;line-height:12.42px;color:#e6e6e6;transform:scaleX(0.926);transform-origin:0 0;width:77.8px;overflow:hidden;">Изображение</div>
<div style="left:1102px;top:547px;width:100px;height:24px;background:#464646;box-shadow:inset 0 1px 0 #5a5a5a, inset 1px 0 0 #5a5a5a"></div>
<div class="t" style="left:1027px;top:580.79px;font-size:12.42px;line-height:12.42px;color:#e6e6e6;transform:scaleX(0.926);transform-origin:0 0;width:77.8px;overflow:hidden;">Замостка фона</div>
<div class="t" style="left:1103.7px;top:580.79px;font-size:12.42px;line-height:12.42px;color:#e6e6e6;transform:scaleX(0.926);transform-origin:0 0;">Заполнение</div>
<div class="t" style="left:1027px;top:607.09px;font-size:12.42px;line-height:12.42px;color:#e6e6e6;transform:scaleX(0.926);transform-origin:0 0;width:77.8px;overflow:hidden;">Видимость</div>
<div style="left:1103px;top:606px;width:15px;height:15px;box-sizing:border-box;border:1px solid #c8c8c8;background:#4a4a4a"></div>
<div class="t" style="left:1027px;top:634.29px;font-size:12.42px;line-height:12.42px;color:#e6e6e6;transform:scaleX(0.926);transform-origin:0 0;width:77.8px;overflow:hidden;">Активность</div>
<div style="left:1103px;top:632px;width:15px;height:15px;box-sizing:border-box;border:1px solid #c8c8c8;background:#4a4a4a"></div>
<svg style="position:absolute;left:1103px;top:606px;" width="15" height="15" viewBox="0 0 15 15" fill="none" stroke="#e0e0e0" stroke-width="1.2"><path d="M3.5 7.5 L6.5 11 L11.5 3.5" stroke="#eeeeee" stroke-width="1.6"/></svg>
<svg style="position:absolute;left:1103px;top:632px;" width="15" height="15" viewBox="0 0 15 15" fill="none" stroke="#e0e0e0" stroke-width="1.2"><path d="M3.5 7.5 L6.5 11 L11.5 3.5" stroke="#eeeeee" stroke-width="1.6"/></svg>
<div style="left:995px;top:656px;width:205px;height:26px;background:#555555;box-shadow:inset 0 1px 0 #6a6a6a, inset 1px 0 0 #6a6a6a, inset 0 -1px 0 #1c1c1c"></div>
<div class="t" style="left:1006.5px;top:662.99px;font-size:12.42px;line-height:12.42px;color:#e6e6e6;transform:scaleX(0.926);transform-origin:0 0;">Клавиатура</div>
<svg style="position:absolute;left:1186px;top:666px;" width="14" height="8" viewBox="0 0 14 8" fill="none" stroke="#e0e0e0" stroke-width="1.2"><path d="M2 7 L7.5 1.5 L13 7 Z" fill="#e6e6e6" stroke="none"/></svg>
<div style="left:995px;top:682px;width:205px;height:29px;background:#555555;box-shadow:inset 1px 0 0 #6a6a6a, inset 0 -1px 0 #5f5f5f"></div>
<div class="t" style="left:1027px;top:690.19px;font-size:12.42px;line-height:12.42px;color:#e6e6e6;transform:scaleX(0.926);transform-origin:0 0;width:77.8px;overflow:hidden;">Клавиатурный</div>
<div style="left:1102px;top:683px;width:100px;height:25px;background:#464646;box-shadow:inset 0 1px 0 #5a5a5a, inset 1px 0 0 #5a5a5a"></div>
<div class="t" style="left:1108.5px;top:689.99px;font-size:12.42px;line-height:12.42px;color:#e6e6e6;transform:scaleX(0.926);transform-origin:0 0;">0</div>
<div style="left:995px;top:711px;width:205px;height:7px;background:#555555;box-shadow:inset 0 1px 0 #6a6a6a"></div>
<svg style="position:absolute;left:993px;top:719px" width="207" height="8"><rect width="207" height="8" fill="url(#hsp)"/></svg>
<div style="left:993px;top:735px;width:147px;height:27px;background:#f5f0f5;box-shadow:inset 0 1px 0 #000, inset -1px 0 0 #000"></div>
<svg style="position:absolute;left:994px;top:737px" width="145" height="25"><defs><pattern id="pg" x="1" y="1" width="2.5" height="2.5" patternUnits="userSpaceOnUse"><rect width="0.9" height="0.9" fill="#d8d4d8"/></pattern></defs><rect width="145" height="25" fill="url(#pg)"/><rect x="8.5" y="8.5" width="6" height="6" fill="#f5f0f5" stroke="#c8c8c8" stroke-width="1"/></svg>
<div style="left:1140px;top:735px;width:60px;height:27px;background:#f3eef3"></div>
<div style="left:828px;top:0px;width:292px;height:24px;background:linear-gradient(#f0f0f0 0px,#cfcfcf 1px,#8a8a8a 3px,#3a3a3a 9px,#161616 13px,#141414 24px)"></div>
<div class="t" style="left:847px;top:6.49px;font-size:12.42px;line-height:12.42px;color:#ffffff;transform:scaleX(0.926);transform-origin:0 0;-webkit-text-stroke:0;">RU</div>
<div class="t" style="left:865px;top:6.49px;font-size:12.42px;line-height:12.42px;color:#ffffff;transform:scaleX(0.926);transform-origin:0 0;">Русский (Россия)</div>
<div class="t" style="left:984px;top:6.49px;font-size:12.42px;line-height:12.42px;color:#ffffff;transform:scaleX(0.926);transform-origin:0 0;">Русская</div>
<div class="t" style="left:1052px;top:6.49px;font-size:12.42px;line-height:12.42px;color:#ffffff;transform:scaleX(0.926);transform-origin:0 0;">Справка</div>
<svg style="position:absolute;left:832px;top:3px" width="10" height="18"><g fill="#5a5a5a"><rect x="1" y="1" width="1.2" height="1.2"/><rect x="1" y="4" width="1.2" height="1.2"/><rect x="1" y="7" width="1.2" height="1.2"/><rect x="1" y="10" width="1.2" height="1.2"/><rect x="1" y="13" width="1.2" height="1.2"/><rect x="1" y="16" width="1.2" height="1.2"/><rect x="4" y="1" width="1.2" height="1.2"/><rect x="4" y="4" width="1.2" height="1.2"/><rect x="4" y="7" width="1.2" height="1.2"/><rect x="4" y="10" width="1.2" height="1.2"/><rect x="4" y="13" width="1.2" height="1.2"/><rect x="4" y="16" width="1.2" height="1.2"/><rect x="7" y="1" width="1.2" height="1.2"/><rect x="7" y="4" width="1.2" height="1.2"/><rect x="7" y="7" width="1.2" height="1.2"/><rect x="7" y="10" width="1.2" height="1.2"/><rect x="7" y="13" width="1.2" height="1.2"/><rect x="7" y="16" width="1.2" height="1.2"/></g></svg>
<div style="left:496.5px;top:760px;width:6px;height:2px;background:#bdbdbd"></div>
<div style="left:593.5px;top:760px;width:6px;height:2px;background:#bdbdbd"></div>
<div style="left:703.5px;top:760px;width:6px;height:2px;background:#bdbdbd"></div>
<div style="left:813.5px;top:760px;width:6px;height:2px;background:#bdbdbd"></div>
<svg style="position:absolute;left:0;top:0" width="1200" height="762" fill="none"><path d="M6 4.5 L8.5 1.5 H20.5 V12.5 L17.5 15.8 H6 Z" fill="#06122a" stroke="#000" stroke-width="0.8"/><path d="M8 3.6 L9.3 2.2 H12 L10.7 3.6 Z M11.8 3.6 L13.1 2.2 H15.8 L14.5 3.6 Z M15.4 3.6 L16.7 2.2 H19.4 L18.1 3.6 Z" fill="#1a55c0" stroke="none"/><path d="M18.3 6 L19.6 4.6 V7.2 L18.3 8.6 Z M18.3 9.6 L19.6 8.2 V10.8 L18.3 12.2 Z M18.3 13.2 L19.6 11.8 V12.5 L18.3 14.2 Z" fill="#1a55c0" stroke="none"/><rect x="6.9" y="5.1" width="2.8" height="2.7" fill="#4a8ef2" stroke="none"/><rect x="10.6" y="5.1" width="2.8" height="2.7" fill="#4a8ef2" stroke="none"/><rect x="14.3" y="5.1" width="2.8" height="2.7" fill="#10d0ff" stroke="none"/><rect x="6.9" y="8.7" width="2.8" height="2.7" fill="#10d0ff" stroke="none"/><rect x="10.6" y="8.7" width="2.8" height="2.7" fill="#4a8ef2" stroke="none"/><rect x="14.3" y="8.7" width="2.8" height="2.7" fill="#4a8ef2" stroke="none"/><rect x="6.9" y="12.3" width="2.8" height="2.7" fill="#4a8ef2" stroke="none"/><rect x="10.6" y="12.3" width="2.8" height="2.7" fill="#4a8ef2" stroke="none"/><rect x="14.3" y="12.3" width="2.8" height="2.7" fill="#10d0ff" stroke="none"/><g stroke="#e2e2e2" stroke-width="1.2"><rect x="4.5" y="27.5" width="20" height="20"/><path d="M5 30 H24" stroke-width="2.4" stroke="#cfcfcf"/><path d="M9 33 V45 M13.7 33 V45 M18.5 33 V45" stroke="#c0c0c0" stroke-width="1.5"/><circle cx="9" cy="36" r="1.5" fill="#555"/><circle cx="13.7" cy="38" r="1.5" fill="#555"/><circle cx="18.5" cy="41" r="1.5" fill="#555"/></g><g stroke="#e2e2e2" stroke-width="1.2"><path d="M46 47.5 H43 L36.5 41.5 V27.5 H51 L54 31 V37"/><path d="M54.37 41.05 L56.17 41.25 L56.17 43.75 L54.37 43.95 L54.11 44.56 L55.25 45.98 L53.48 47.75 L52.06 46.61 L51.45 46.87 L51.25 48.67 L48.75 48.67 L48.55 46.87 L47.94 46.61 L46.52 47.75 L44.75 45.98 L45.89 44.56 L45.63 43.95 L43.83 43.75 L43.83 41.25 L45.63 41.05 L45.89 40.44 L44.75 39.02 L46.52 37.25 L47.94 38.39 L48.55 38.13 L48.75 36.33 L51.25 36.33 L51.45 38.13 L52.06 38.39 L53.48 37.25 L55.25 39.02 L54.11 40.44 Z" fill="#555" stroke-width="1.1" stroke-linejoin="round"/><circle cx="50" cy="42.5" r="2.4" stroke-width="1.1"/><path d="M39 30 h1 M41 32 h1 M43 34.5 h1 M46 34.5 h1 M49 34.5 h1 M43 37 h1 M43 39.5 h1" stroke-width="1.4"/></g><g stroke="#e2e2e2" stroke-width="1.2"><path d="M71 32 V27.5 H86.5 V32"/><path d="M69 32 L69.8 47.5 H88 L89.8 31.5 H80.5 L78.5 34 H69 Z" fill="#555"/></g><g stroke="#e2e2e2" stroke-width="1.2"><rect x="101.5" y="27.5" width="20" height="20" rx="1"/><path d="M105.5 27.5 V37.5 H117.5 V27.5"/><path d="M106.5 47.5 V40.5 H116.5 V47.5 M110.5 47.5 V43.5 H112.5 V47.5"/></g><path d="M134 37 L142 29.5 V33.5 H148 L154 45.5 L147.5 39 H142 V43.5 Z" stroke="#e2e2e2" stroke-width="1.2" stroke-linejoin="round"/><path d="M165.7 34.7 H173.6 L169.64999999999998 39 Z" fill="#e2e2e2" stroke="none"/><path d="M205.5 36.5 L197.5 29.5 V33.5 H191 L185.5 45.5 L191.5 39 H197.5 V43.5 Z" stroke="#9a9a9a" stroke-width="1.1" stroke-linejoin="round"/><path d="M217.5 35 H225.5 L221.5 39 Z" fill="#8a8a8a" stroke="none"/><g stroke="#e2e2e2" stroke-width="1.2"><rect x="236.5" y="27.5" width="5" height="5"/><rect x="236.5" y="34.5" width="5" height="5"/><rect x="236.5" y="42.5" width="5" height="5"/><path d="M244 45.5 H255.5 V30.5 H247" stroke-width="1.8"/><path d="M243 30.5 L248 26.5 V34.5 Z" fill="#e2e2e2" stroke="none"/></g><g stroke="#e2e2e2" stroke-width="1.2"><path d="M524.5 32.5 V29.5 H528.5 M540.5 29.5 H544.5 V32.5 M524.5 41.5 V45.5 H528.5 M540.5 45.5 H544.5 V41.5"/><rect x="527.5" y="31.5" width="14" height="11"/></g><g stroke="#e2e2e2" stroke-width="1.1"><path d="M557.5 28.5 H565 V32 H560 V34.5 H557.5 Z M566.5 28.5 H571 V34.5 H566.5 M572.5 28.5 H577.5 V34.5 H570 M560 31.5 H563"/><path d="M556 36.5 H578" stroke-width="1.5"/><path d="M567 37 V41.5" stroke-width="1.5"/><path d="M562.5 41 H571.5 L567 46 Z" fill="#e2e2e2" stroke="none"/></g><g stroke="#e2e2e2" stroke-width="1"><rect x="588.5" y="27.5" width="3" height="3"/><path d="M590.5 30.5 V45 M590.5 33.5 H593.5 M590.5 39.5 H593.5 M590.5 45.5 H593.5"/><rect x="593.5" y="31.5" width="4" height="3.5"/><rect x="593.5" y="37.5" width="4" height="3.5"/><rect x="593.5" y="43.5" width="4" height="3.5"/><path d="M600.5 27 V47" stroke-width="1.5"/><path d="M601 37.5 H606" stroke-width="2"/><path d="M605 33.5 L610 37.5 L605 41.5 Z" fill="#e2e2e2" stroke="none"/></g><g stroke="#d0d0d0" stroke-width="1"><path d="M622.5 30.5 V45 M622.5 33.5 H625.5 M622.5 39.5 H625.5 M622.5 45.5 H625.5"/><rect x="625.5" y="31.5" width="4" height="3.5"/><rect x="625.5" y="37.5" width="4" height="3.5"/><rect x="625.5" y="43.5" width="4" height="3.5"/><path d="M632.5 27 V47" stroke-width="1.5"/><path d="M633 37.5 H638" stroke-width="2"/><path d="M637 33.5 L642 37.5 L637 41.5 Z" fill="#d0d0d0" stroke="none"/></g><g stroke="#e2e2e2" stroke-width="1"><rect x="653.5" y="27.5" width="3" height="3"/><path d="M655.5 30.5 V45 M655.5 33.5 H658.5 M655.5 39.5 H658.5 M655.5 45.5 H658.5"/><rect x="658.5" y="31.5" width="4" height="3.5"/><rect x="658.5" y="37.5" width="4" height="3.5"/><rect x="658.5" y="43.5" width="4" height="3.5"/><path d="M665.5 27 V47" stroke-width="1.5"/><path d="M666 37.5 H671" stroke-width="2"/><path d="M670 33.5 L675 37.5 L670 41.5 Z" fill="#e2e2e2" stroke="none"/><path d="M660.5 45 V49 M658.5 47.5 H662.5"/></g><g stroke="#e2e2e2" stroke-width="1.2"><path d="M696.5 36 V30" stroke-width="1.8"/><path d="M692 31 L696.5 26.5 L701 31 Z" fill="#e2e2e2" stroke="none"/><path d="M686 37.5 H707"/><path d="M687.5 47.5 V40.5 H706.5 V47.5 Z M687.5 43.5 H700 L701.5 40.5"/></g><g stroke="#e2e2e2" stroke-width="1.2"><path d="M727.5 27 V47" stroke-width="1.5"/><path d="M723 37 H727" stroke-width="2"/><path d="M724 33 L718.5 37 L724 41 Z" fill="#e2e2e2" stroke="none"/><rect x="730.5" y="39.5" width="9" height="7"/></g><g stroke="#e2e2e2" stroke-width="1.2"><path d="M759.5 27 V47" stroke-width="1.5"/><path d="M755 37 H759" stroke-width="2"/><path d="M756 33 L750.5 37 L756 41 Z" fill="#e2e2e2" stroke="none"/><rect x="763.5" y="27.5" width="8" height="16"/><path d="M763.5 31.5 H771.5 M763.5 35.5 H771.5 M763.5 39.5 H771.5"/></g><circle cx="1168.5" cy="37.5" r="10" stroke="#e2e2e2" stroke-width="1.2"/><path d="M1165.5 34.5 Q1165.5 31.5 1168.5 31.5 Q1171.5 31.5 1171.5 34.3 Q1171.5 36 1169.5 37 Q1168.5 37.6 1168.5 39.5" stroke="#e2e2e2" stroke-width="2"/><circle cx="1168.5" cy="42.5" r="1.2" fill="#e2e2e2" stroke="none"/><path d="M1191 30 L1196 44 L1200 31" stroke="#e2e2e2" stroke-width="1.2"/><path d="M1165 9 H1170" stroke="#cfcfcf" stroke-width="1.5"/><rect x="1181.5" y="2.5" width="8" height="8" stroke="#dcdcdc" stroke-width="1.2"/><rect x="1186.5" y="7.5" width="8" height="8" fill="#555" stroke="#dcdcdc" stroke-width="1.2"/><rect x="967.5" y="6.5" width="13" height="9" rx="1" fill="#cfcfcf" stroke="#888" stroke-width="1"/><path d="M969 9 h10 M969 11 h10 M970 13.3 h8" stroke="#8a8a8a" stroke-width="0.9" stroke-dasharray="1 1"/><circle cx="1042.5" cy="11.5" r="6.5" fill="#1030c0" stroke="#b8b8c8" stroke-width="1"/><path d="M1040.3 9.5 Q1040.3 7.3 1042.5 7.3 Q1044.7 7.3 1044.7 9.3 Q1044.7 10.6 1043.2 11.3 Q1042.5 11.8 1042.5 13" stroke="#fff" stroke-width="1.5"/><circle cx="1042.5" cy="15" r="0.9" fill="#fff" stroke="none"/><path d="M1109 7.5 H1115" stroke="#f0f0f0" stroke-width="1.5"/><path d="M1109 15 H1115 L1112.0 18.5 Z" fill="#f0f0f0" stroke="none"/><g stroke="#e2e2e2" stroke-width="1.2"><path d="M16 70.5 H13.5 V88.5 H28.5 V70.5 H26"/><path d="M17 71.5 V69.5 H19.5 Q20.5 66.8 22 69.5 H24.5 V71.5 Z"/><path d="M15.5 72.5 H26.5 V84.5 L23.5 87.5 H15.5 Z"/><path d="M23.5 87.5 V84.5 H26.5"/></g><path d="M42.5 73.5 H52.5 M42.5 75.5 H52.5" stroke="#e2e2e2" stroke-width="1"/><path d="M43.0 77 H52.0 L47.5 83 Z" fill="#e2e2e2" stroke="none"/><g stroke="#e2e2e2" stroke-width="1.2"><rect x="65.5" y="68.5" width="11" height="13"/><path d="M70.5 74.5 H81.5 V86 L79 88.5 H70.5 Z" fill="#555"/><path d="M79 88.5 V86 H81.5"/></g><g stroke="#e2e2e2" stroke-width="1.2"><path d="M95 68 L103.5 78.5 L107 82 M98 68 L105.5 77 M116 68 L107.5 78.5 L104 82 M113 68 L105.5 77"/><circle cx="99" cy="85.5" r="3.3"/><circle cx="112" cy="85.5" r="3.3"/><path d="M101.5 83 L104.5 80 M109.5 83 L106.5 80"/></g><g stroke="#e2e2e2" stroke-width="1.2"><path d="M130.5 80.5 V68.5 H141.5 V71"/><path d="M133.5 84.5 V71.5 H144.5 V75" fill="#555"/><path d="M136.5 75.5 H147.5 V86 L145 88.5 H136.5 Z" fill="#555"/><path d="M145 88.5 V86 H147.5"/></g><path d="M160 73.5 H170 M160 75.5 H170" stroke="#e2e2e2" stroke-width="1"/><path d="M160.5 77 H169.5 L165 83 Z" fill="#e2e2e2" stroke="none"/><g stroke="#e2e2e2" stroke-width="1.2"><path d="M186 80.5 H180.5 V68.5 H193.5 V75"/><path d="M187 74 L200 79.5 L195.5 81.2 L199.2 85.5 L196.8 87.8 L193.2 83.5 L190.5 87 Z" fill="#555" stroke-linejoin="round"/></g><g stroke="#e2e2e2" stroke-width="1.2"><path d="M221.5 69.5 H233.5 V82 L231 84.5 H221.5 Z"/><path d="M231 84.5 V82 H233.5"/></g><circle cx="218" cy="82" r="5.8" fill="#cdcdcd" stroke="#555" stroke-width="1"/><path d="M215.5 79.5 L220.5 84.5 M220.5 79.5 L215.5 84.5" stroke="#444" stroke-width="1.5"/><path d="M253 68.5 L273 76.5 L267.5 79.3 L273.5 85.5 L270.5 88.3 L264.5 82 L261 87.5 Z" stroke="#e2e2e2" stroke-width="1.2" stroke-linejoin="round"/><circle cx="292.5" cy="75.5" r="7" stroke="#e2e2e2" stroke-width="1.3"/><path d="M297.5 80.5 L304.5 86.5" stroke="#d8d8d8" stroke-width="3.2" stroke-linecap="round"/><path d="M329.5 67 V89" stroke="#e2e2e2" stroke-width="1.1" stroke-dasharray="1 1.6"/><path d="M338.5 67 V89" stroke="#e2e2e2" stroke-width="1.1" stroke-dasharray="1 1.6"/><path d="M325 71.5 H346" stroke="#e2e2e2" stroke-width="1.1" stroke-dasharray="1 1.6"/><path d="M325 81.5 H346" stroke="#e2e2e2" stroke-width="1.1" stroke-dasharray="1 1.6"/><path d="M362.5 67 V89" stroke="#e2e2e2" stroke-width="1.1" stroke-dasharray="1 1.6"/><path d="M371.5 67 V89" stroke="#e2e2e2" stroke-width="1.1" stroke-dasharray="1 1.6"/><path d="M358 71.5 H379" stroke="#e2e2e2" stroke-width="1.1" stroke-dasharray="1 1.6"/><path d="M358 81.5 H379" stroke="#e2e2e2" stroke-width="1.1" stroke-dasharray="1 1.6"/><path d="M394.5 67 V89" stroke="#a8a8a8" stroke-width="1.1" stroke-dasharray="1 1.6"/><path d="M403.5 67 V89" stroke="#a8a8a8" stroke-width="1.1" stroke-dasharray="1 1.6"/><path d="M390 71.5 H411" stroke="#a8a8a8" stroke-width="1.1" stroke-dasharray="1 1.6"/><path d="M390 81.5 H411" stroke="#a8a8a8" stroke-width="1.1" stroke-dasharray="1 1.6"/><path d="M426.5 67 V89" stroke="#b0b0b0" stroke-width="1.1" stroke-dasharray="1 1.6"/><path d="M435.5 67 V89" stroke="#b0b0b0" stroke-width="1.1" stroke-dasharray="1 1.6"/><path d="M422 71.5 H443" stroke="#b0b0b0" stroke-width="1.1" stroke-dasharray="1 1.6"/><path d="M422 81.5 H443" stroke="#b0b0b0" stroke-width="1.1" stroke-dasharray="1 1.6"/><circle cx="361.5" cy="71.5" r="3" stroke="#e2e2e2" stroke-width="1.2"/><circle cx="361.5" cy="71.5" r="1" fill="#e2e2e2" stroke="none"/><rect x="328.3" y="70.3" width="2.4" height="2.4" fill="#f0f0f0" stroke="none"/><rect x="337.3" y="70.3" width="2.4" height="2.4" fill="#f0f0f0" stroke="none"/><rect x="328.3" y="80.3" width="2.4" height="2.4" fill="#f0f0f0" stroke="none"/><rect x="337.3" y="80.3" width="2.4" height="2.4" fill="#f0f0f0" stroke="none"/><rect x="369.8" y="70.3" width="2.4" height="2.4" fill="#f0f0f0" stroke="none"/><rect x="360.3" y="80.3" width="2.4" height="2.4" fill="#f0f0f0" stroke="none"/><rect x="369.8" y="80.3" width="2.4" height="2.4" fill="#f0f0f0" stroke="none"/><g stroke="#a8a8a8" stroke-width="1.1"><rect x="394.5" y="71.5" width="9" height="8"/><circle cx="394.5" cy="71.5" r="1.6" fill="#555"/><circle cx="403.5" cy="71.5" r="1.6" fill="#555"/><circle cx="394.5" cy="79.5" r="1.6" fill="#555"/><circle cx="403.5" cy="79.5" r="1.6" fill="#555"/></g><g stroke="#b0b0b0" stroke-width="1.1"><rect x="426.5" y="71.5" width="9" height="10"/><circle cx="426.5" cy="71.5" r="1.6" fill="#555"/><circle cx="435.5" cy="71.5" r="1.6" fill="#555"/><circle cx="426.5" cy="81.5" r="1.6" fill="#555"/><circle cx="435.5" cy="81.5" r="1.6" fill="#555"/></g><g stroke="#e2e2e2" stroke-width="1.2"><circle cx="462.3" cy="78" r="7.8"/><path d="M458 78 H466.5" stroke-width="2.2"/><rect x="474.5" y="68.5" width="3" height="20" rx="1.5"/><rect x="477.5" y="76.5" width="41" height="3" fill="#262626" stroke="#6a6a6a" stroke-width="1"/><circle cx="529.7" cy="78" r="7.8"/><path d="M525 78 H534.4 M529.7 73.3 V82.7" stroke-width="2.2"/></g><path d="M587 73.5 H597 M587 75.5 H597" stroke="#e2e2e2" stroke-width="1"/><path d="M587.5 77 H596.5 L592 83 Z" fill="#e2e2e2" stroke="none"/><g stroke="#b8b8b8" stroke-width="1.2"><path d="M617.5 68 V89"/><rect x="620.5" y="71.5" width="10" height="5"/><rect x="620.5" y="79.5" width="13" height="5"/><path d="M657.5 68 V71.5 M657.5 76.5 V79.5 M657.5 84.5 V89"/><rect x="652.5" y="71.5" width="10" height="5"/><rect x="649.5" y="79.5" width="16" height="5"/><path d="M698.5 68 V89"/><rect x="685.5" y="71.5" width="10" height="5"/><rect x="681.5" y="79.5" width="14" height="5"/><path d="M712 70.5 H733"/><rect x="716.5" y="73.5" width="5" height="13"/><rect x="724.5" y="73.5" width="5" height="10"/><path d="M744 78 H748.5 M753.5 78 H757.5 M762.5 78 H765"/><rect x="748.5" y="69.5" width="5" height="17"/><rect x="757.5" y="72.5" width="5" height="11"/><path d="M777 86.5 H798"/><rect x="780.5" y="70.5" width="5" height="13"/><rect x="788.5" y="73.5" width="5" height="10"/><path d="M816.5 68 V89 M823.5 68 V89"/><rect x="810.5" y="71.5" width="3" height="8"/><rect x="818.5" y="72.5" width="3" height="10"/><rect x="826.5" y="78.5" width="3" height="8"/><path d="M842 74.5 H863 M842 82.5 H863"/><rect x="852.5" y="69.5" width="8" height="3"/><rect x="846.5" y="76.5" width="10" height="4"/><rect x="844.5" y="84.5" width="8" height="3"/></g><g stroke="#e2e2e2" stroke-width="1.2"><rect x="882.5" y="68.5" width="21" height="15"/><path d="M885 76 Q893 68 901 76 Q893 84 885 76 Z"/><circle cx="893" cy="76" r="2.6" fill="#e2e2e2"/><path d="M891.5 84 V87 M894.5 84 V87 M887 87.5 H899"/></g><path d="M922 67.5 H943" stroke="#b0b0b0" stroke-width="1.2"/><path d="M927.5 85 V73" stroke="#b0b0b0" stroke-width="2"/><path d="M923.5 74 L927.5 69 L931.5 74 Z" fill="#b0b0b0" stroke="none"/><rect x="934.5" y="68.5" width="6" height="5" stroke="#b0b0b0" stroke-width="1"/><rect x="934.5" y="75.5" width="6" height="5" stroke="#b0b0b0" stroke-width="1"/><g fill="#a8a8a8" stroke="none"><rect x="934" y="82" width="1" height="1"/><rect x="936" y="82" width="1" height="1"/><rect x="938" y="82" width="1" height="1"/><rect x="940" y="82" width="1" height="1"/><rect x="934" y="87" width="1" height="1"/><rect x="936" y="87" width="1" height="1"/><rect x="938" y="87" width="1" height="1"/><rect x="940" y="87" width="1" height="1"/><rect x="934" y="84" width="1" height="1"/><rect x="940" y="84" width="1" height="1"/><rect x="934" y="86" width="1" height="1"/><rect x="940" y="86" width="1" height="1"/></g><path d="M954 88.5 H975" stroke="#b0b0b0" stroke-width="1.2"/><path d="M959.5 71 V83" stroke="#b0b0b0" stroke-width="2"/><path d="M955.5 82 L959.5 87 L963.5 82 Z" fill="#b0b0b0" stroke="none"/><g fill="#a8a8a8" stroke="none"><rect x="966" y="68" width="1" height="1"/><rect x="968" y="68" width="1" height="1"/><rect x="970" y="68" width="1" height="1"/><rect x="972" y="68" width="1" height="1"/><rect x="966" y="73" width="1" height="1"/><rect x="968" y="73" width="1" height="1"/><rect x="970" y="73" width="1" height="1"/><rect x="972" y="73" width="1" height="1"/><rect x="966" y="70" width="1" height="1"/><rect x="972" y="70" width="1" height="1"/><rect x="966" y="72" width="1" height="1"/><rect x="972" y="72" width="1" height="1"/></g><rect x="966.5" y="75.5" width="6" height="5" stroke="#b0b0b0" stroke-width="1"/><rect x="966.5" y="82.5" width="6" height="5" stroke="#b0b0b0" stroke-width="1"/><path d="M992.5 85 V72" stroke="#b0b0b0" stroke-width="2"/><path d="M988.5 73 L992.5 68 L996.5 73 Z" fill="#b0b0b0" stroke="none"/><rect x="999.5" y="68.5" width="6" height="5" stroke="#b0b0b0" stroke-width="1"/><rect x="999.5" y="75.5" width="6" height="5" stroke="#b0b0b0" stroke-width="1"/><g fill="#a8a8a8" stroke="none"><rect x="999" y="82" width="1" height="1"/><rect x="1001" y="82" width="1" height="1"/><rect x="1003" y="82" width="1" height="1"/><rect x="1005" y="82" width="1" height="1"/><rect x="999" y="87" width="1" height="1"/><rect x="1001" y="87" width="1" height="1"/><rect x="1003" y="87" width="1" height="1"/><rect x="1005" y="87" width="1" height="1"/><rect x="999" y="84" width="1" height="1"/><rect x="1005" y="84" width="1" height="1"/><rect x="999" y="86" width="1" height="1"/><rect x="1005" y="86" width="1" height="1"/></g><path d="M1024.5 71 V84" stroke="#b0b0b0" stroke-width="2"/><path d="M1020.5 83 L1024.5 88 L1028.5 83 Z" fill="#b0b0b0" stroke="none"/><g fill="#a8a8a8" stroke="none"><rect x="1031" y="68" width="1" height="1"/><rect x="1033" y="68" width="1" height="1"/><rect x="1035" y="68" width="1" height="1"/><rect x="1037" y="68" width="1" height="1"/><rect x="1031" y="73" width="1" height="1"/><rect x="1033" y="73" width="1" height="1"/><rect x="1035" y="73" width="1" height="1"/><rect x="1037" y="73" width="1" height="1"/><rect x="1031" y="70" width="1" height="1"/><rect x="1037" y="70" width="1" height="1"/><rect x="1031" y="72" width="1" height="1"/><rect x="1037" y="72" width="1" height="1"/></g><rect x="1031.5" y="75.5" width="6" height="5" stroke="#b0b0b0" stroke-width="1"/><rect x="1031.5" y="82.5" width="6" height="5" stroke="#b0b0b0" stroke-width="1"/><g stroke="#b0b0b0" stroke-width="1.6" fill="none"><path d="M1059.5 77 Q1060 71 1066 70.5"/><path d="M1065 67 L1069.5 70.5 L1065 74 Z" fill="#b0b0b0" stroke="none"/><path d="M1091.5 77 Q1092 71 1098 70.5"/><path d="M1097 67 L1101.5 70.5 L1097 74 Z" fill="#b0b0b0" stroke="none"/><path d="M1125 71.5 H1133" stroke-width="1.8"/><path d="M1126 67.5 L1121 71.5 L1126 75.5 Z" fill="#b0b0b0" stroke="none"/></g><g stroke="#b0b0b0" stroke-width="1"><rect x="1071.5" y="76.5" width="4" height="11"/><path d="M1064 82.5 H1071 M1064 87.5 H1071 M1064 82.5 V87.5" stroke-dasharray="1 1"/><path d="M1097 77 L1106 85 L1103 88 L1094 80 Z"/><path d="M1093 82.5 H1100 M1093 87.5 H1103 M1093 82.5 V87.5" stroke-dasharray="1 1"/><path d="M1125.5 87.5 V79 H1129.5 V87.5 Z"/><rect x="1131.5" y="78.5" width="4" height="9" stroke-dasharray="1 1"/><path d="M1155.5 71.5 V67.5 H1159 L1160 68.5 H1163.5 V71.5 Z"/><path d="M1155.5 77.5 H1163.5 M1155.5 82.5 H1160 M1155.5 77.5 V82.5" stroke-dasharray="1 1"/></g><path d="M1173.5 84 V72" stroke="#b0b0b0" stroke-width="2"/><path d="M1169.5 73 L1173.5 68 L1177.5 73 Z" fill="#b0b0b0" stroke="none"/><g fill="#bdbdbd" stroke="none"><rect x="12" y="108" width="1" height="1"/><rect x="20" y="108" width="1" height="1"/><rect x="12" y="110" width="1" height="1"/><rect x="20" y="110" width="1" height="1"/><rect x="12" y="112" width="1" height="1"/><rect x="20" y="112" width="1" height="1"/><rect x="12" y="114" width="1" height="1"/><rect x="20" y="114" width="1" height="1"/><rect x="12" y="116" width="1" height="1"/><rect x="20" y="116" width="1" height="1"/><rect x="12" y="118" width="1" height="1"/><rect x="20" y="118" width="1" height="1"/><rect x="12" y="120" width="1" height="1"/><rect x="20" y="120" width="1" height="1"/><rect x="12" y="122" width="1" height="1"/><rect x="20" y="122" width="1" height="1"/><rect x="12" y="124" width="1" height="1"/><rect x="20" y="124" width="1" height="1"/><rect x="12" y="126" width="1" height="1"/><rect x="20" y="126" width="1" height="1"/><rect x="12" y="128" width="1" height="1"/><rect x="20" y="128" width="1" height="1"/><rect x="14" y="108" width="1" height="1"/><rect x="14" y="128" width="1" height="1"/><rect x="16" y="108" width="1" height="1"/><rect x="16" y="128" width="1" height="1"/><rect x="18" y="108" width="1" height="1"/><rect x="18" y="128" width="1" height="1"/></g><g stroke="#b8b8b8" stroke-width="1"><rect x="16.5" y="112.5" width="4" height="4" fill="#555"/><rect x="14.5" y="118.5" width="4" height="4" fill="#555"/><path d="M24 114.5 H31" stroke-width="2"/><path d="M26 110.5 L21.5 114.5 L26 118.5 Z" fill="#b8b8b8" stroke="none"/></g><g fill="#bdbdbd" stroke="none"><rect x="44" y="108" width="1" height="1"/><rect x="52" y="108" width="1" height="1"/><rect x="44" y="110" width="1" height="1"/><rect x="52" y="110" width="1" height="1"/><rect x="44" y="112" width="1" height="1"/><rect x="52" y="112" width="1" height="1"/><rect x="44" y="114" width="1" height="1"/><rect x="52" y="114" width="1" height="1"/><rect x="44" y="116" width="1" height="1"/><rect x="52" y="116" width="1" height="1"/><rect x="44" y="118" width="1" height="1"/><rect x="52" y="118" width="1" height="1"/><rect x="44" y="120" width="1" height="1"/><rect x="52" y="120" width="1" height="1"/><rect x="44" y="122" width="1" height="1"/><rect x="52" y="122" width="1" height="1"/><rect x="44" y="124" width="1" height="1"/><rect x="52" y="124" width="1" height="1"/><rect x="44" y="126" width="1" height="1"/><rect x="52" y="126" width="1" height="1"/><rect x="44" y="128" width="1" height="1"/><rect x="52" y="128" width="1" height="1"/><rect x="46" y="108" width="1" height="1"/><rect x="46" y="128" width="1" height="1"/><rect x="48" y="108" width="1" height="1"/><rect x="48" y="128" width="1" height="1"/><rect x="50" y="108" width="1" height="1"/><rect x="50" y="128" width="1" height="1"/></g><g stroke="#b8b8b8" stroke-width="1"><rect x="43.5" y="112.5" width="4" height="4" fill="#555"/><rect x="49.5" y="118.5" width="4" height="4" fill="#555"/><path d="M56 114.5 H63" stroke-width="2"/><path d="M58 110.5 L53.5 114.5 L58 118.5 Z" fill="#b8b8b8" stroke="none"/></g><g stroke="#e0e0e0" stroke-width="1.2"><rect x="5.5" y="146.5" width="3" height="3"/><path d="M7 149.5 V155 H15 M10 152 H14"/><rect x="10.5" y="150.5" width="3" height="3"/><rect x="13.5" y="153.5" width="3" height="3"/><path d="M4 156.5 H17"/><path d="M10.5 157 V160"/><path d="M7.5 159 L10.5 162 L13.5 159 Z" fill="#e0e0e0" stroke="none"/></g><path d="M110.5 152 H117.5 L114.0 156 Z" fill="#e2e2e2" stroke="none"/><path d="M130.5 146.5 H143.5 L138.5 153.5 V160.5 H135.5 V153.5 Z" stroke="#b8b8b8" stroke-width="1.1"/><circle cx="162" cy="152" r="5.2" stroke="#b8b8b8" stroke-width="1.1"/><path d="M158 156 L154.5 159.5" stroke="#a8a8a8" stroke-width="2.8" stroke-linecap="round"/><circle cx="187" cy="152" r="5.2" stroke="#b8b8b8" stroke-width="1.1"/><path d="M183 156 L179.5 159.5" stroke="#a8a8a8" stroke-width="2.8" stroke-linecap="round"/><circle cx="213" cy="152" r="5.2" stroke="#b8b8b8" stroke-width="1.1"/><path d="M209 156 L205.5 159.5" stroke="#a8a8a8" stroke-width="2.8" stroke-linecap="round"/><path d="M187 155 V151 M185 152 L187 149.5 L189 152" stroke="#b8b8b8" stroke-width="1.3"/><path d="M213 149 V153 M211 152 L213 154.5 L215 152" stroke="#b8b8b8" stroke-width="1.3"/><path d="M4.5 180 L8.5 184 L4.5 188 Z" fill="#8a8a8a" stroke="none"/><path d="M4.5 345 L8.5 349 L4.5 353 Z" fill="#8a8a8a" stroke="none"/><path d="M1.5 208 H9.0 L5.25 212.5 Z" fill="#9a9a9a" stroke="none"/><path d="M13 231 H20.5 L16.75 235.5 Z" fill="#9a9a9a" stroke="none"/><path d="M24.5 254.8 H32.0 L28.25 259.3 Z" fill="#9a9a9a" stroke="none"/><path d="M36 277.5 H43.5 L39.75 282.0 Z" fill="#9a9a9a" stroke="none"/><rect x="13" y="173" width="21" height="21" fill="#62ae78" stroke="none"/><g stroke="#f2f2f2" stroke-width="1" fill="none"><rect x="16.5" y="176.5" width="9" height="7"/><path d="M21 183.5 V186 M17 186.5 H25 M21 187 V189 M17 189.5 H25"/><rect x="27.5" y="178.5" width="3" height="13"/><path d="M26 184 H30"/></g><rect x="13" y="200" width="21" height="21" fill="#e2775f" stroke="none"/><g stroke="#f2f2f2" stroke-width="1" fill="none"><rect x="16.5" y="203.5" width="14" height="14"/><rect x="18.5" y="205.5" width="4" height="3"/><rect x="24.5" y="205.5" width="4" height="3"/><rect x="22.5" y="212.5" width="5" height="4"/><path d="M20.5 208.5 V214.5 H22.5 M26.5 208.5 V212.5 M22.5 207 H24.5"/></g><rect x="26" y="223" width="21" height="21" fill="#e2775f" stroke="none"/><g stroke="#f2f2f2" stroke-width="1" fill="none"><rect x="29.5" y="226.5" width="14" height="14"/><rect x="31.5" y="228.5" width="4" height="3"/><rect x="37.5" y="228.5" width="4" height="3"/><rect x="35.5" y="235.5" width="5" height="4"/><path d="M33.5 231.5 V237.5 H35.5 M39.5 231.5 V235.5 M35.5 230 H37.5"/></g><rect x="37" y="246" width="21" height="21" fill="#3c3c3c" stroke="none"/><g stroke="#e8e8e8" stroke-width="1" fill="none"><path d="M41.5 253 V250.5 H46 L47.5 252 H53.5 V255"/><path d="M41.5 263.5 V255.5 H46 L47.5 254 H55 L53.5 263.5 Z" fill="#3c3c3c"/></g><rect x="49" y="269" width="21" height="21" fill="#3c3c3c" stroke="none"/><g stroke="#e8e8e8" stroke-width="1" fill="none"><path d="M53.5 276 V273.5 H58 L59.5 275 H65.5 V278"/><path d="M53.5 286.5 V278.5 H58 L59.5 277 H67 L65.5 286.5 Z" fill="#3c3c3c"/></g><rect x="60" y="292" width="21" height="21" fill="#d89a5e" stroke="none"/><g stroke="#f2f2f2" stroke-width="1" fill="none"><rect x="63.5" y="295.5" width="14" height="14"/><path d="M70.5 295.5 V309.5 M63.5 302.5 H77.5"/></g><rect x="37" y="314" width="21" height="21" fill="#dd735f" stroke="none"/><g stroke="#f2f2f2" stroke-width="1" fill="none"><path d="M41.5 317.5 V332.5"/><path d="M42 320.5 H49 V318 L54.5 322.5 L49 327 V324.5 H45"/><path d="M52 326.5 V329.5 H46 V332 L41.5 328 L46 324"/></g><rect x="13" y="339" width="21" height="21" fill="#7e7d5a" stroke="none"/><g stroke="#f2f2f2" stroke-width="1" fill="none"><rect x="16.5" y="342.5" width="4" height="12"/><rect x="22.5" y="342.5" width="4" height="12"/><path d="M27 349.5 H30.5 V356.5 H18 V355"/></g><g stroke="#e6e6e6" stroke-width="1.1"><path d="M135.5 317 V333"/><path d="M136 325 H140 M139.5 322 L143 325 L139.5 328 Z"/><rect x="143.5" y="320.5" width="5" height="3"/><rect x="143.5" y="323.5" width="5" height="3"/><rect x="143.5" y="326.5" width="5" height="3"/><rect x="157.5" y="320.5" width="5" height="3"/><rect x="157.5" y="323.5" width="5" height="3"/><rect x="157.5" y="326.5" width="5" height="3"/><path d="M163 325 H167 M166.5 322 L170 325 L166.5 328 Z"/><path d="M170.5 317 V333"/></g><circle cx="248.3" cy="173.5" r="7.3" stroke="#e2e2e2" stroke-width="1.2"/><path d="M243.8 173.5 H252.8 M248.3 169.0 V178.0" stroke="#e2e2e2" stroke-width="1.8"/><path d="M443 177.0 H455 L449 170.7 Z" fill="#e6e6e6" stroke="none"/><circle cx="248.3" cy="203.0" r="7.3" stroke="#e2e2e2" stroke-width="1.2"/><path d="M243.8 203.0 H252.8 M248.3 198.5 V207.5" stroke="#e2e2e2" stroke-width="1.8"/><path d="M443 206.5 H455 L449 200.2 Z" fill="#e6e6e6" stroke="none"/><circle cx="248.3" cy="259.0" r="7.3" stroke="#e2e2e2" stroke-width="1.2"/><path d="M243.8 259.0 H252.8 M248.3 254.5 V263.5" stroke="#e2e2e2" stroke-width="1.8"/><path d="M443 262.5 H455 L449 256.2 Z" fill="#e6e6e6" stroke="none"/><circle cx="248.3" cy="288.0" r="7.3" stroke="#e2e2e2" stroke-width="1.2"/><path d="M243.8 288.0 H252.8 M248.3 283.5 V292.5" stroke="#e2e2e2" stroke-width="1.8"/><path d="M443 291.5 H455 L449 285.2 Z" fill="#e6e6e6" stroke="none"/><circle cx="248.3" cy="343.0" r="7.3" stroke="#e2e2e2" stroke-width="1.2"/><path d="M243.8 343.0 H252.8 M248.3 338.5 V347.5" stroke="#e2e2e2" stroke-width="1.8"/><path d="M443 346.5 H455 L449 340.2 Z" fill="#e6e6e6" stroke="none"/><path d="M280.5 331 V356" stroke="#1c1c1c" stroke-width="1"/><path d="M267 340.5 H276" stroke="#d8d8d8" stroke-width="2"/><rect x="290.5" y="337.5" width="5" height="4" stroke="#e0e0e0" stroke-width="1"/><rect x="513.5" y="199.5" width="19" height="19" fill="#f5f0f5" stroke="#7a7a7a" stroke-width="1.1"/><g stroke="#e0e0e0" stroke-width="1.1"><rect x="1000.5" y="172.5" width="11" height="4"/><rect x="1000.5" y="175.5" width="11" height="4"/><path d="M1000 181.5 H1012"/><path d="M1006 182 V185"/><path d="M1003 184 L1006 187 L1009 184 Z" fill="#e0e0e0" stroke="none"/></g><g stroke="#c8c8c8" stroke-width="1.1"><path d="M1028 172.5 H1039 L1035 178 V185.5 H1032.5 V178 Z"/><path d="M1024 173 h2 l-2 3 h2 M1024 180 h2.5 l-2.5 4 h2.5" stroke-width="0.9"/></g><g stroke="#c8c8c8" stroke-width="1"><path d="M1051.5 172 V186 M1052 176 H1056 M1055 173.5 L1058 176 L1055 178.5 Z M1052 182 H1056 M1052.5 182 L1055 179.5 M1052.5 182 L1055 184.5"/><rect x="1059.5" y="172.5" width="5" height="3"/><rect x="1059.5" y="175.5" width="5" height="3"/><rect x="1059.5" y="178.5" width="5" height="3"/></g><g stroke="#e0e0e0" stroke-width="1.2"><rect x="1151.5" y="172.5" width="12" height="5"/><rect x="1151.5" y="180.5" width="12" height="5"/><path d="M1152 175 H1163 M1152 183 H1163" stroke="#9a9a9a"/></g><path d="M1177.5 187 V172 M1178 172.5 H1188 L1185.5 176 L1188 180 H1178" stroke="#e0e0e0" stroke-width="1.1"/><g stroke="#e0e0e0" stroke-width="1.3"><rect x="896.5" y="741.5" width="8" height="8"/><rect x="907.5" y="741.5" width="8" height="8"/><rect x="896.5" y="752.5" width="8" height="8"/><rect x="907.5" y="752.5" width="8" height="8"/><rect x="928.5" y="741.5" width="20" height="22"/><path d="M928.5 746.5 H948.5 M928.5 752.5 H948.5 M933.5 741.5 V763"/><rect x="960.5" y="741.5" width="5" height="22"/><rect x="967.5" y="741.5" width="5" height="22"/><rect x="974.5" y="741.5" width="5" height="22"/></g></svg>
<div style="left:172px;top:341px;width:527px;height:62px;background:#ffffe1;border:1px solid #2a2a2a;box-shadow:1px 1px 0 #3a3a3a"></div>
<div class="t" style="left:182.7px;top:369.06px;font-size:12.10px;line-height:12.10px;color:#111;transform:scaleX(0.926);transform-origin:0 0;font-style:italic;-webkit-text-stroke:0;">Входящая связь</div>
<div class="t" style="left:182.7px;top:386.75px;font-size:12.11px;line-height:12.11px;color:#111;transform:scaleX(0.926);transform-origin:0 0;-webkit-text-stroke:0;">Объекты.mod_BB-0010.Ресурсы.Окна.Окно_выходов.Связи.Флаг 1.Отмечен-Объекты.ВКЛ/ВЫКЛ</div>
<div style="left:22px;top:407px;width:526px;height:62px;background:#ffffe1;border:1px solid #2a2a2a;box-shadow:1px 1px 0 #3a3a3a"></div>
<div class="t" style="left:31.5px;top:412.26px;font-size:12.10px;line-height:12.10px;color:#111;transform:scaleX(0.926);transform-origin:0 0;font-style:italic;-webkit-text-stroke:0;">Исходящая связь</div>
<div class="t" style="left:31.5px;top:430.45px;font-size:12.11px;line-height:12.11px;color:#111;transform:scaleX(0.926);transform-origin:0 0;-webkit-text-stroke:0;">Объекты.mod_BB-0010.Ресурсы.Окна.Окно_выходов.Связи.Объекты.ВКЛ/ВЫКЛ-Флаг 1.Отмечен</div>
<svg style="position:absolute;left:0;top:0" width="1200" height="762" fill="none" stroke="#e8101a" stroke-width="2.6" stroke-linecap="round"><ellipse cx="141.2" cy="325.3" rx="11.2" ry="13"/><ellipse cx="165.8" cy="324.4" rx="10.8" ry="12.2"/><path d="M141 337 L134 414"/><path d="M172 336 L181 349"/><circle cx="522.7" cy="208.9" r="18.8" stroke-width="3"/></svg>
</body></html>
